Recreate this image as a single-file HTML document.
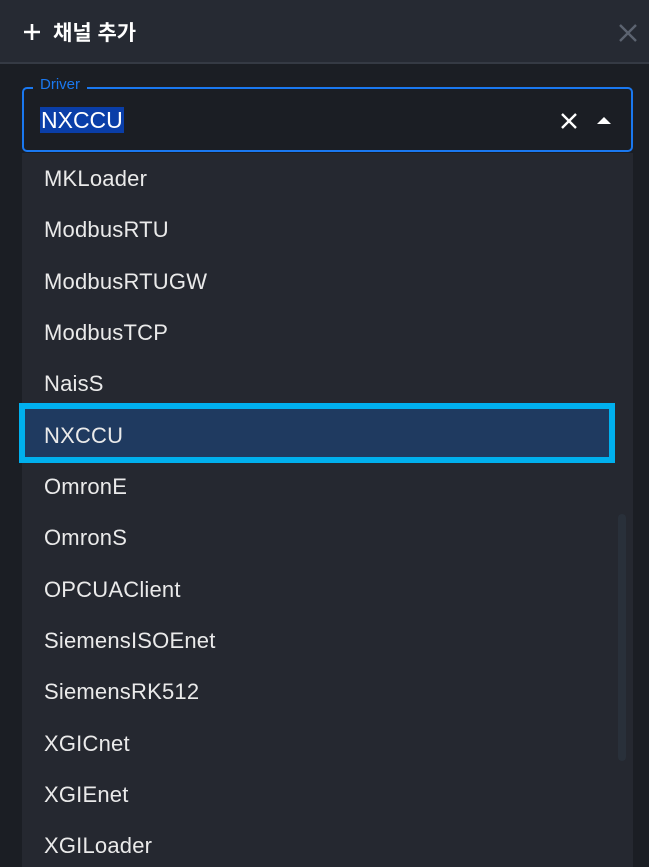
<!DOCTYPE html>
<html><head><meta charset="utf-8"><style>
*{margin:0;padding:0;box-sizing:border-box}
html,body{width:649px;height:867px;overflow:hidden;background:#1b1e24;font-family:"Liberation Sans","Noto Sans CJK KR",sans-serif}
.hdr{position:absolute;left:0;top:0;width:649px;height:64px;background:#262a33;border-bottom:2px solid #353a44}
.title{position:absolute;left:53px;top:17px;color:#fff;font-size:21px;font-weight:bold;font-family:"Liberation Sans","Noto Sans CJK KR",sans-serif}
.box{position:absolute;left:22px;top:87px;width:611px;height:65px;border:2px solid #1a78f0;border-radius:5px}
.lbl{position:absolute;left:33px;top:76px;padding:0 7px;background:#1b1e24;color:#1a78f0;font-size:15px}
.val{position:absolute;left:40px;top:107px;height:26px;line-height:26px;background:#0a3ea8;color:#fff;font-size:23px;padding:0 1px}
.list{position:absolute;left:22px;top:153px;width:611px;height:714px;background:#252830}
.it{position:absolute;left:44px;color:#eaeaea;font-size:22px;line-height:24px;letter-spacing:0.2px}
.sel{position:absolute;left:19px;top:403px;width:596px;height:60px;background:#1f3a60;border:6px solid #00b0ee}
.sb{position:absolute;left:618px;top:514px;width:8px;height:247px;background:#29303a;border-radius:4px}
</style></head><body>
<div class="hdr">
<svg style="position:absolute;left:23px;top:23px" width="18" height="18"><path d="M9 1V17M1 9H17" stroke="#fff" stroke-width="2.6"/></svg>
<div class="title">채널 추가</div>
<svg style="position:absolute;left:618px;top:23px" width="20" height="20"><path d="M2 2L18 18M18 2L2 18" stroke="#5c6370" stroke-width="2.4"/></svg>
</div>
<div class="box"></div>
<div class="lbl">Driver</div>
<div class="val">NXCCU</div>
<svg style="position:absolute;left:560px;top:112px" width="18" height="18"><path d="M2 2L16 16M16 2L2 16" stroke="#fff" stroke-width="2.4"/></svg>
<svg style="position:absolute;left:597px;top:116px" width="14" height="10"><path d="M0 8L7 1L14 8Z" fill="#fff"/></svg>
<div class="list"></div>
<div class="sb"></div>
<div class="sel"></div>
<div class="it" style="top:167px">MKLoader</div>
<div class="it" style="top:218px">ModbusRTU</div>
<div class="it" style="top:270px">ModbusRTUGW</div>
<div class="it" style="top:321px">ModbusTCP</div>
<div class="it" style="top:372px">NaisS</div>
<div class="it" style="top:424px">NXCCU</div>
<div class="it" style="top:475px">OmronE</div>
<div class="it" style="top:526px">OmronS</div>
<div class="it" style="top:578px">OPCUAClient</div>
<div class="it" style="top:629px">SiemensISOEnet</div>
<div class="it" style="top:680px">SiemensRK512</div>
<div class="it" style="top:732px">XGICnet</div>
<div class="it" style="top:783px">XGIEnet</div>
<div class="it" style="top:834px">XGILoader</div>
</body></html>
